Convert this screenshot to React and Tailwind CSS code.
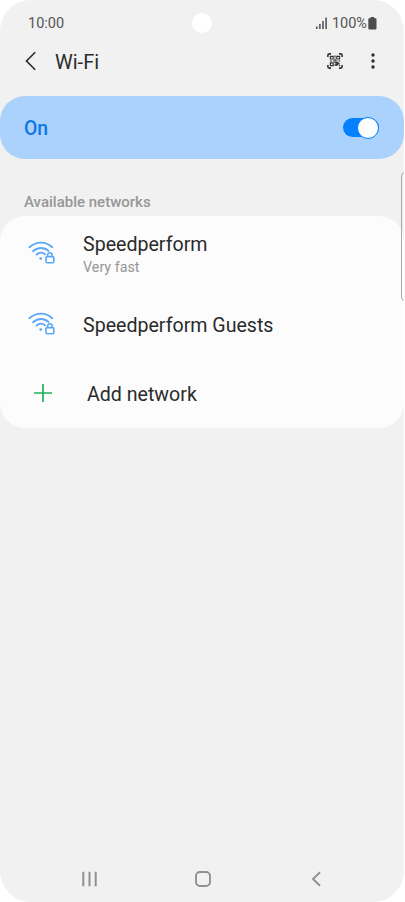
import React, { useState } from "react";

const WifiLockIcon = () => (
    <svg width="28" height="26" viewBox="0 0 28 26" fill="none" stroke="#5aa7fb" strokeWidth="1.9" strokeLinecap="round">
        <path d="M1.4 7.2C8.5 1.1 17.5 1.1 24.3 7.2" />
        <path d="M5 11.2C9.8 6.9 16.2 6.9 20.5 10.9" />
        <path d="M8.7 14.5C11.2 12 14.8 12 17 14.3" />
        <circle cx="12.7" cy="18.6" r="1.4" fill="#5aa7fb" stroke="none" />
        <rect x="18" y="16.6" width="7.8" height="6.2" rx="1.2" strokeWidth="1.6" />
        <path d="M19.6 16.4V15a2.3 2.3 0 0 1 4.6 0v1.4" strokeWidth="1.5" />
    </svg>
);

const QrScanIcon = () => (
    <svg width="16" height="16" viewBox="0 0 16 16" fill="none" stroke="#353535">
        <path d="M.9 4V2.2Q.9 .9 2.2 .9H4M12 .9h1.8q1.3 0 1.3 1.3V4M15.1 12v1.8q0 1.3-1.3 1.3H12M4 15.1H2.2Q.9 15.1.9 13.8V12" strokeWidth="1.6" />
        <path d="M3.4 3.4h2.8v2.6H3.4zM9.8 3.4h2.8v2.6H9.8zM3.4 9.8h2.8v2.8H3.4z" strokeWidth="1.2" />
        <path d="M8 2.6v2M8 5.4v2.2M3 8h2M6 8h4.4M11.4 8h1.8M7.4 9.5h4M8.4 10.8h4.4M7.3 12h3.8M9 9v4M11 9v2.6M12.6 12v1.2" strokeWidth="1.2" />
    </svg>
);

const StatusBar = () => (
    <div className="flex h-[46px] items-center justify-between pl-[28px] pr-[27px] text-[14.5px] text-[#555]">
        <span className="pt-[2px]">10:00</span>
        <div className="flex items-center">
            <svg className="mr-[5px]" width="11" height="12" viewBox="0 0 11 12" fill="#555">
                <path d="M0 9.5h1.6V12H0zM3.1 7h1.6v5H3.1zM6.2 4h1.6v8H6.2zM9.3 .5h1.6V12H9.3z" />
            </svg>
            <span className="pt-[2px]">100%</span>
            <svg className="ml-[1px]" width="9" height="13" viewBox="0 0 9 13" fill="#4d4d4d">
                <path d="M2.6 0h3.6v1.2h1.5q.8 0 .8.8v9.6q0 .8-.8.8H1.1q-.8 0-.8-.8V2q0-.8.8-.8h1.5z" />
            </svg>
        </div>
    </div>
);

const NetworkRow = ({ name, note, className }) => (
    <button className={`flex w-full items-center pl-[28px] text-left ${className}`}>
        <div className={note ? "-mt-[4px]" : "-mt-[2px]"}>
            <WifiLockIcon />
        </div>
        <div className="ml-[27px]">
            <p className="text-[19.6px] leading-[23px] text-[#2b2b2b]">{name}</p>
            {note && <p className="text-[14.3px] leading-[22px] text-[#979797]">{note}</p>}
        </div>
    </button>
);

const App = () => {
    const [enabled, setEnabled] = useState(true);

    return (
        <div className="h-[902px] w-[405px] overflow-hidden bg-white font-['Roboto',sans-serif]">
            <div className="relative flex h-full w-[404px] flex-col overflow-hidden rounded-[31px] bg-[#f1f1f1]">
                <StatusBar />
                {/* Camera hole */}
                <div className="absolute left-[192px] top-[13px] size-[20px] rounded-full bg-white"></div>

                <header className="flex h-[30px] items-center pl-[25px] pr-[29px]">
                    <svg width="12" height="20" viewBox="0 0 12 20" fill="none" stroke="#2b2b2b" strokeWidth="1.6">
                        <path d="M10.2 1.2 1.5 10l8.7 8.8" />
                    </svg>
                    <h1 className="ml-[18px] pt-[1px] text-[20px] text-[#2b2b2b]">Wi-Fi</h1>
                    <div className="ml-auto flex items-center">
                        <QrScanIcon />
                        <svg className="ml-[28px]" width="4" height="16" viewBox="0 0 4 16" fill="#2b2b2b">
                            <circle cx="2" cy="2" r="1.7" />
                            <circle cx="2" cy="8" r="1.7" />
                            <circle cx="2" cy="14" r="1.7" />
                        </svg>
                    </div>
                </header>

                <div className="mt-[20px] flex h-[63px] shrink-0 items-center justify-between rounded-[25px] bg-[#abd2fc] pl-[24px] pr-[25px]">
                    <span className="pt-[2px] text-[19.4px] font-medium text-[#0b77e3]">{enabled ? "On" : "Off"}</span>
                    <button onClick={() => setEnabled(!enabled)} className="flex h-[19px] w-[36.5px] items-center rounded-full bg-[#0381fe]">
                        <span className={`size-[22px] shrink-0 rounded-full border border-[#0381fe] bg-[#fcfcfc] ${enabled ? "ml-auto" : ""}`}></span>
                    </button>
                </div>

                <h2 className="mt-[33px] pl-[24px] text-[15px] font-medium leading-[20px] text-[#979797]">Available networks</h2>

                <div className="mt-[4px] h-[212px] shrink-0 rounded-[25px] bg-[#fcfcfc]">
                    <NetworkRow name="Speedperform" note="Very fast" className="h-[78px]" />
                    <NetworkRow name="Speedperform Guests" className="h-[62px]" />
                    <button className="flex h-[75px] w-full items-center pl-[34px] text-left">
                        <svg className="-mt-[1px]" width="18" height="18" viewBox="0 0 18 18" stroke="#20b15a" strokeWidth="1.7">
                            <path d="M9 0v18M0 9h18" />
                        </svg>
                        <span className="ml-[35px] pt-[2px] text-[19.6px] text-[#2b2b2b]">Add network</span>
                    </button>
                </div>

                {/* Edge panel handle */}
                <div className="absolute left-[401px] top-[172px] h-[129px] w-[10px] rounded-[4px] border border-[#aaa]"></div>

                <nav className="mt-auto flex h-[46px] items-center pl-[82px]">
                    <svg width="15" height="16" viewBox="0 0 15 16" stroke="#909090" strokeWidth="2">
                        <path d="M1.3 .8v14.4M7.5 .8v14.4M13.7 .8v14.4" />
                    </svg>
                    <svg className="ml-[98px]" width="16" height="16" viewBox="0 0 16 16" fill="none" stroke="#909090" strokeWidth="1.9">
                        <rect x="1" y="1" width="14" height="14" rx="4" />
                    </svg>
                    <svg className="ml-[100px]" width="10" height="16" viewBox="0 0 10 16" fill="none" stroke="#909090" strokeWidth="1.9">
                        <path d="M9 1.2 2 8l7 6.8" />
                    </svg>
                </nav>
            </div>
        </div>
    );
};
export default App;
